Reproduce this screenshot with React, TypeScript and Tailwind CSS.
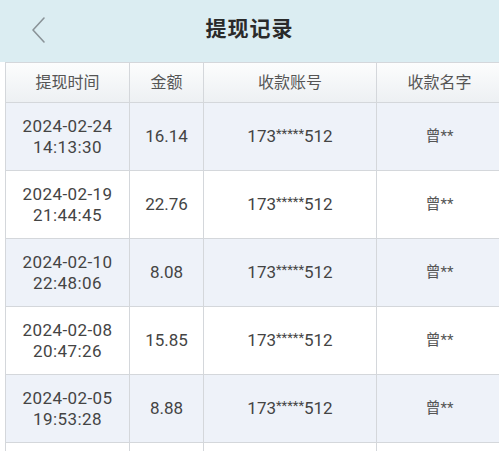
import React from "react";

const rows = [
  { d: "2024-02-24", t: "14:13:30", a: "16.14" },
  { d: "2024-02-19", t: "21:44:45", a: "22.76" },
  { d: "2024-02-10", t: "22:48:06", a: "8.08" },
  { d: "2024-02-08", t: "20:47:26", a: "15.85" },
  { d: "2024-02-05", t: "19:53:28", a: "8.88" },
];

const cols = "grid grid-cols-[124px_74px_173px_125px]";

export default function App() {
  return (
    <div
      className="w-[499px] h-[451px] overflow-hidden bg-white"
      style={{ fontFamily: 'Roboto, "Noto Sans CJK SC", sans-serif' }}
    >
      <div className="relative h-[62px] bg-[#dbedf2] flex items-center justify-center">
        <svg className="absolute left-[30px] top-[16px]" width="18" height="28" viewBox="0 0 18 28">
          <path d="M14 2 L3 14 L14 26" fill="none" stroke="#8a9398" strokeWidth="1.6" strokeLinecap="round" strokeLinejoin="round" />
        </svg>
        <div className="text-[21px] font-bold text-[#2a2a2a] tracking-[1px] mt-[-2px]">提现记录</div>
      </div>
      <div className="ml-[5px] w-[496px] border-l border-t border-[#d4d7db]">
        <div className={`${cols} h-[40px] bg-gradient-to-b from-[#fcfdfd] to-[#edf0f3] border-b border-[#d4d7db] text-[16px] text-[#555]`}>
          <div className="flex items-center justify-center border-r border-[#d4d7db]">提现时间</div>
          <div className="flex items-center justify-center border-r border-[#d4d7db]">金额</div>
          <div className="flex items-center justify-center border-r border-[#d4d7db]">收款账号</div>
          <div className="flex items-center justify-center">收款名字</div>
        </div>
        {rows.map((r, i) => (
          <div
            key={i}
            className={`${cols} h-[68px] border-b border-[#d4d7db] text-[#444] ${i % 2 === 0 ? "bg-[#eef2f9]" : "bg-white"}`}
          >
            <div className="flex flex-col items-center justify-center border-r border-[#d4d7db] text-[17px] leading-[21px] tracking-[0.4px]">
              <span>{r.d}</span>
              <span>{r.t}</span>
            </div>
            <div className="flex items-center justify-center border-r border-[#d4d7db] text-[17px]">{r.a}</div>
            <div className="flex items-center justify-center border-r border-[#d4d7db] text-[17px]">
              173<span className="text-[13px] relative top-[-3px]">*****</span>512
            </div>
            <div className="flex items-center justify-center text-[15px] text-[#555]">曾**</div>
          </div>
        ))}
        <div className={`${cols} h-[68px] bg-white`}>
          <div className="border-r border-[#d4d7db]" />
          <div className="border-r border-[#d4d7db]" />
          <div className="border-r border-[#d4d7db]" />
          <div />
        </div>
      </div>
    </div>
  );
}
